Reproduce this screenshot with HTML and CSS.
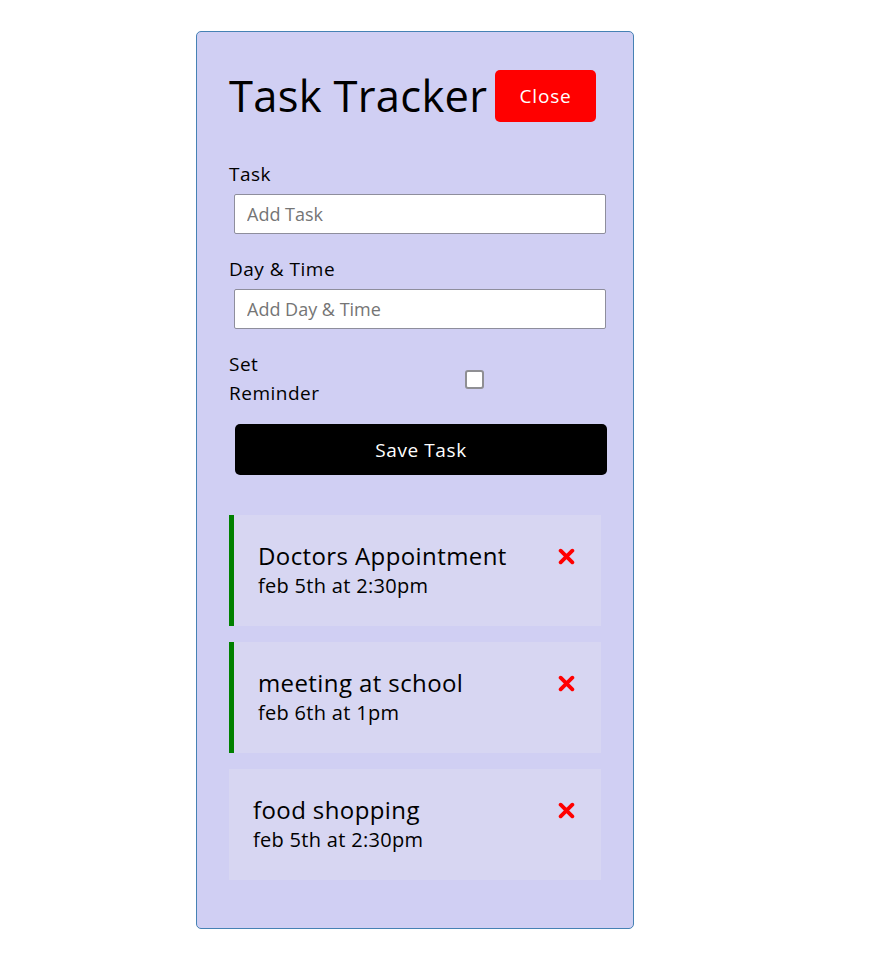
FILE: index.html
```html
<!DOCTYPE html>
<html lang="en">
<head>
<meta charset="utf-8">
<title>Task Tracker</title>
<link rel="stylesheet" href="styles.css">
</head>
<body>
<div class="container">
  <header class="header">
    <h1 class="title">Task Tracker</h1>
    <button class="btn btn-close">Close</button>
  </header>
  <form class="add-form">
    <div class="form-control">
      <label>Task</label>
      <input type="text" placeholder="Add Task">
    </div>
    <div class="form-control">
      <label>Day &amp; Time</label>
      <input type="text" placeholder="Add Day &amp; Time">
    </div>
    <div class="form-control form-control-check">
      <label>Set Reminder</label>
      <div class="check-wrap"><input type="checkbox" class="check"></div>
    </div>
    <button type="button" class="btn btn-block">Save Task</button>
  </form>
  <div class="tasks">
    <div class="task reminder">
      <h3>Doctors Appointment <svg class="x" viewBox="0 0 16 16" width="17" height="17"><path d="M2.5 2.5 L13.5 13.5 M13.5 2.5 L2.5 13.5" stroke="#ff0000" stroke-width="3.6" stroke-linecap="round"/></svg></h3>
      <p>feb 5th at 2:30pm</p>
    </div>
    <div class="task reminder">
      <h3>meeting at school <svg class="x" viewBox="0 0 16 16" width="17" height="17"><path d="M2.5 2.5 L13.5 13.5 M13.5 2.5 L2.5 13.5" stroke="#ff0000" stroke-width="3.6" stroke-linecap="round"/></svg></h3>
      <p>feb 6th at 1pm</p>
    </div>
    <div class="task">
      <h3>food shopping <svg class="x" viewBox="0 0 16 16" width="17" height="17"><path d="M2.5 2.5 L13.5 13.5 M13.5 2.5 L2.5 13.5" stroke="#ff0000" stroke-width="3.6" stroke-linecap="round"/></svg></h3>
      <p>feb 5th at 2:30pm</p>
    </div>
  </div>
</div>
</body>
</html>
```

FILE: styles.css
```css
* { box-sizing: border-box; margin: 0; padding: 0; }

body {
  background: #ffffff;
  font-family: "Open Sans", "Noto Sans", sans-serif;
  color: #000;
}

.container {
  width: 438px;
  margin: 31px 0 0 196px;
  padding: 33px 32px 32px;
  border: 1px solid steelblue;
  border-radius: 5px;
  background: #d0cff3;
}

.header {
  display: flex;
  justify-content: space-between;
  align-items: center;
  margin-bottom: 33px;
}

.title {
  font-size: 43.5px;
  font-weight: 400;
  line-height: 52px;
  letter-spacing: 0.3px;
}

.btn {
  display: inline-block;
  border: none;
  border-radius: 5px;
  color: #fff;
  font-family: inherit;
  cursor: pointer;
}

.btn-close {
  width: 101px;
  height: 52px;
  margin: 5px;
  background: #ff0000;
  font-size: 19px;
  letter-spacing: 0.8px;
}

.form-control {
  display: flow-root;
  margin-bottom: 16px;
}

.form-control label {
  display: block;
  font-size: 19px;
  line-height: 29px;
  letter-spacing: 0.5px;
}

.form-control input[type="text"] {
  display: block;
  width: 100%;
  height: 40px;
  margin: 5px 0 5px 5px;
  padding: 0 12px;
  border: 1px solid #8e8e9c;
  border-radius: 2px;
  background: #fff;
  font-family: "Open Sans", sans-serif;
  font-size: 18px;
  outline: none;
}

.form-control input::placeholder { color: #757575; }

.form-control-check {
  display: flex;
  align-items: center;
  justify-content: space-between;
}

.form-control-check label { flex: 0 1 110px; }

.check-wrap {
  flex: 0 0 248px;
  display: flex;
  justify-content: center;
}

.check {
  appearance: none;
  width: 19px;
  height: 19px;
  margin-right: 6px;
  border: 2px solid #8f8f93;
  border-radius: 3px;
  background: #fff;
}

.btn-block {
  display: block;
  width: 100%;
  height: 51px;
  margin-left: 6px;
  background: #000;
  font-size: 19px;
  letter-spacing: 0.6px;
}

.add-form { margin-bottom: 40px; }

.tasks {
  display: flex;
  flex-direction: column;
  gap: 16px;
  padding-bottom: 16px;
}

.task {
  height: 111px;
  padding: 26px 26px 0 24px;
  background: #d7d6f2;
}

.task.reminder { border-left: 5px solid green; }

.task h3 {
  display: flex;
  justify-content: space-between;
  align-items: center;
  font-size: 24px;
  font-weight: 500;
  line-height: 30px;
  letter-spacing: 0.4px;
}

.task p {
  font-size: 20px;
  line-height: 30px;
  letter-spacing: 0.3px;
}

.x { display: block; }
```
